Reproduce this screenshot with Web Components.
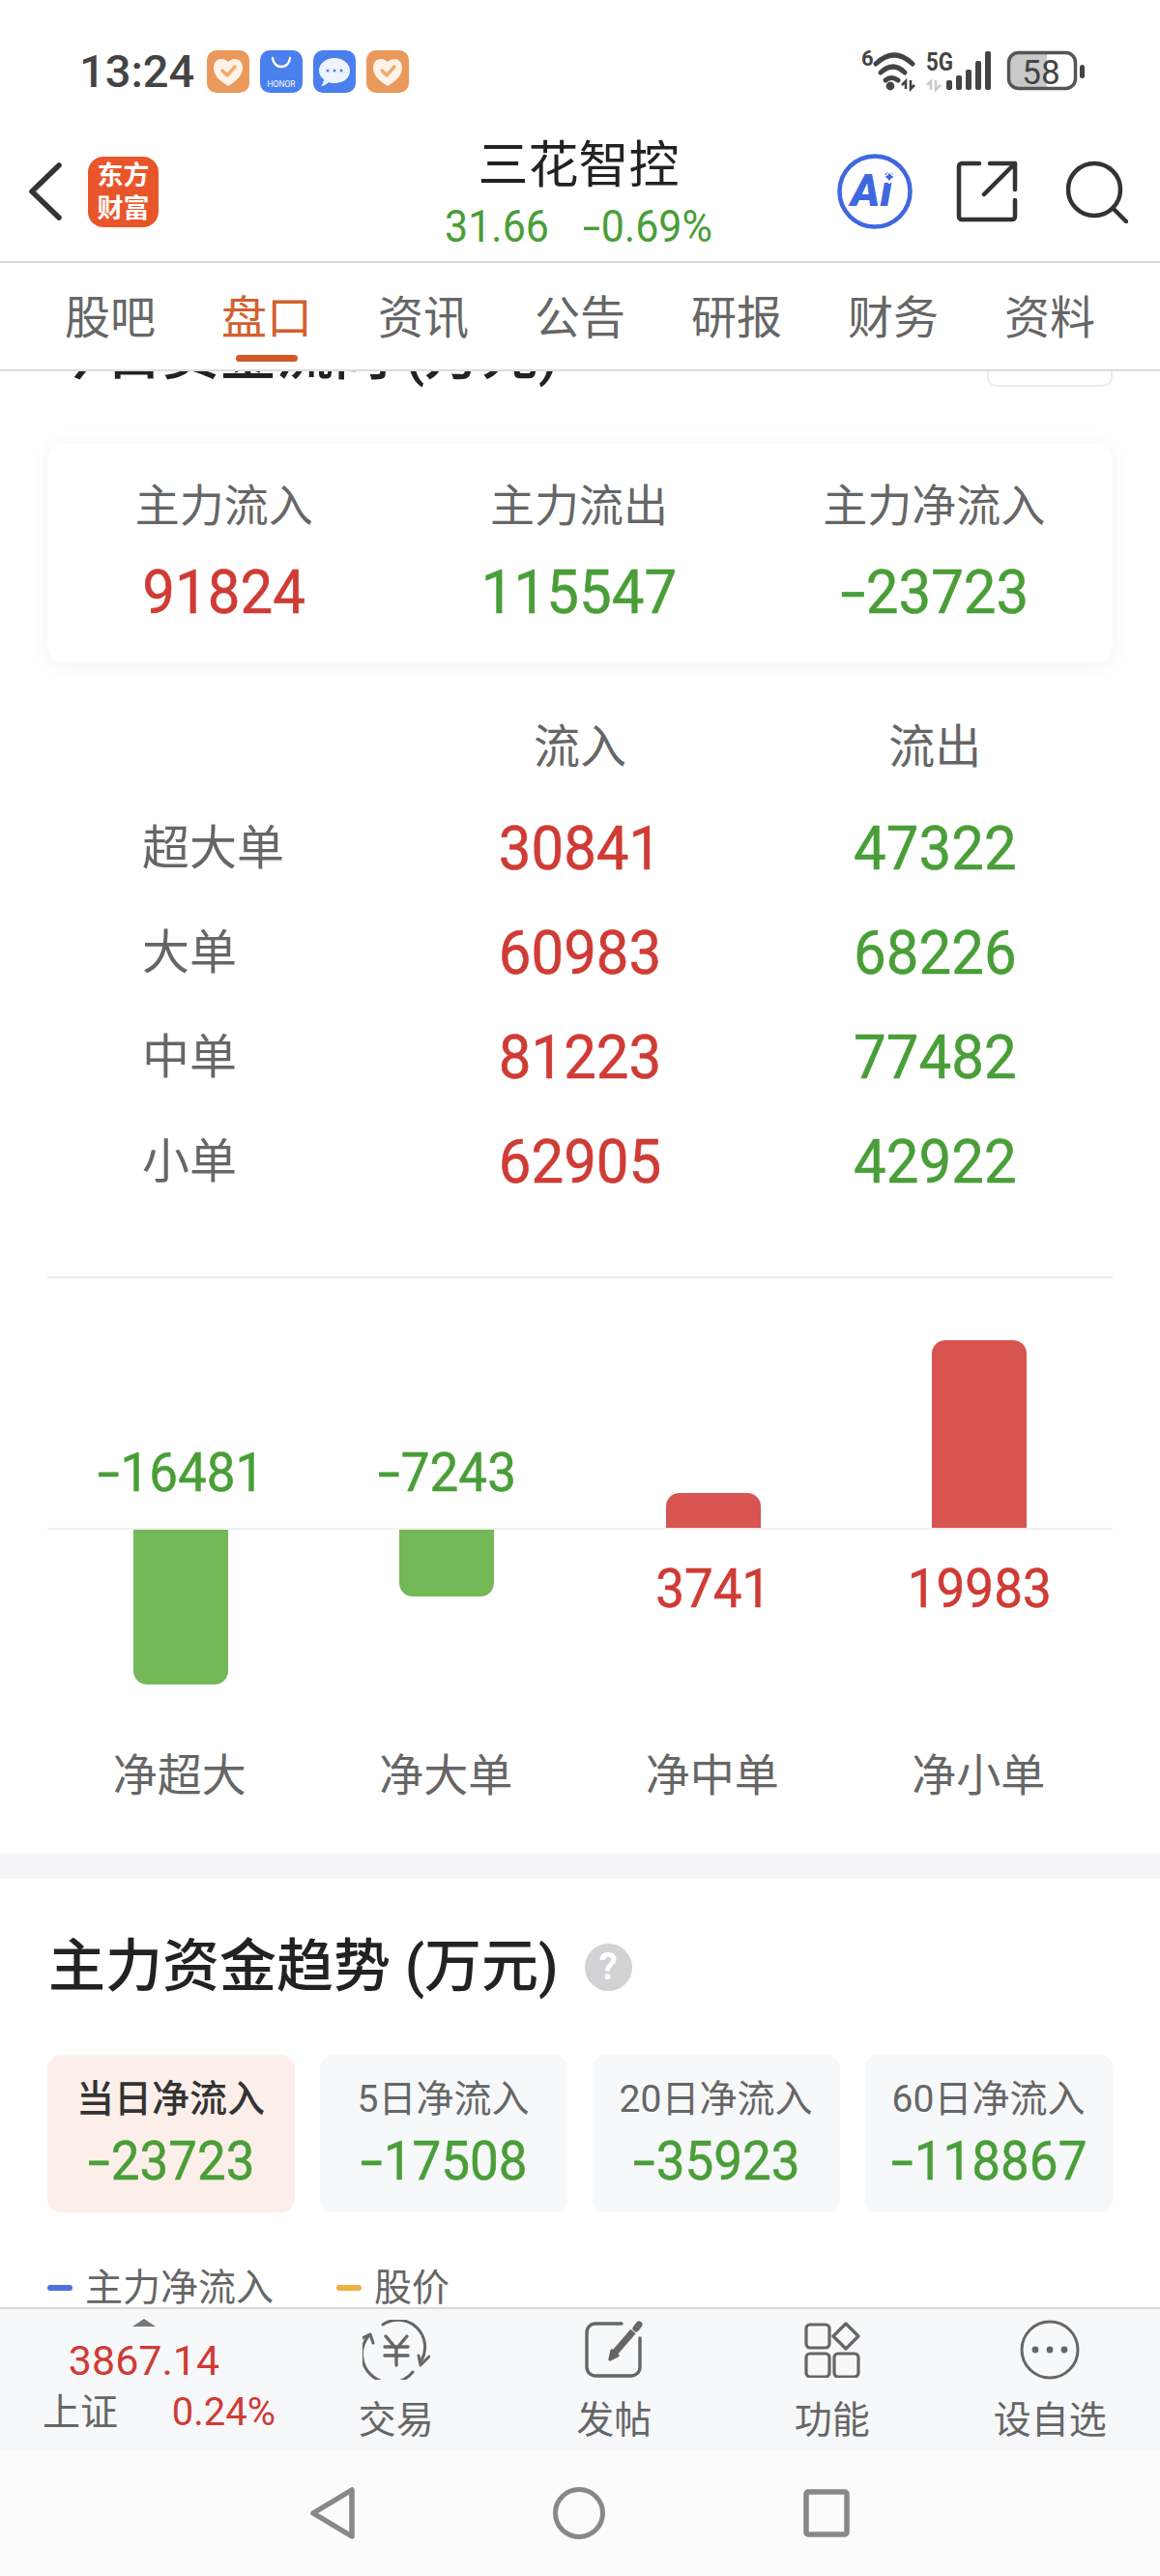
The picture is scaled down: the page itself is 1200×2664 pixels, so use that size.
<!DOCTYPE html>
<html lang="zh">
<head>
<meta charset="utf-8">
<title>三花智控</title>
<style>
  html, body { margin: 0; padding: 0; background: #fff; }
  body {
    width: 1200px;
    height: 2664px;
    overflow: hidden;
    display: flex;
    flex-direction: column;
    font-family: Roboto, "Noto Sans CJK SC", sans-serif;
  }
  body > * { flex: none; }
  body > scroll-area { flex: 1 1 0; min-height: 0; }
</style>
</head>
<body>
  <status-bar></status-bar>
  <app-header name="三花智控" price="31.66" change="-0.69%"></app-header>
  <tab-strip active="盘口" items="股吧,盘口,资讯,公告,研报,财务,资料"></tab-strip>

  <scroll-area>
    <clipped-title>今日资金流向 (万元)</clipped-title>
    <flow-summary>
      <flow-stat label="主力流入" tone="up" value="91824"></flow-stat>
      <flow-stat label="主力流出" tone="down" value="115547"></flow-stat>
      <flow-stat label="主力净流入" tone="down" value="-23723"></flow-stat>
    </flow-summary>
    <flow-table></flow-table>
    <net-chart>
      <net-bar label="净超大" value="-16481" height="160"></net-bar>
      <net-bar label="净大单" value="-7243" height="69"></net-bar>
      <net-bar label="净中单" value="3741" height="36"></net-bar>
      <net-bar label="净小单" value="19983" height="194"></net-bar>
    </net-chart>
    <trend-section heading="主力资金趋势 (万元)">
      <trend-tab slot="tabs" label="当日净流入" value="-23723" active></trend-tab>
      <trend-tab slot="tabs" label="5日净流入" value="-17508"></trend-tab>
      <trend-tab slot="tabs" label="20日净流入" value="-35923"></trend-tab>
      <trend-tab slot="tabs" label="60日净流入" value="-118867"></trend-tab>
    </trend-section>
  </scroll-area>

  <bottom-bar>
    <tool-item label="交易">
      <svg width="70" height="62" viewBox="0 0 70 62" fill="none" stroke="#666" stroke-width="3" stroke-linecap="round" stroke-linejoin="round">
        <path d="M21 5A28 28 0 0 1 61 42"/>
        <path d="M69 38L60 47L58 37"/>
        <path d="M52 54A28 28 0 0 1 6 17"/>
        <path d="M0 19L8 15L11 24"/>
        <path d="M24 17L35 30L46 17M23 28H47M23 37H47M35 30V47" stroke-width="3.4"/>
      </svg>
    </tool-item>
    <tool-item label="发帖">
      <svg width="60" height="60" viewBox="0 0 60 60" fill="none" stroke="#666" stroke-width="3.4" stroke-linecap="round" stroke-linejoin="round">
        <path d="M38 3H11a9 9 0 0 0-9 9V48a9 9 0 0 0 9 9H48a9 9 0 0 0 9-9V18"/>
        <path d="M31 33L50 11" stroke-width="7" stroke-linecap="butt"/>
        <path d="M26 40L28 31L34 36Z" fill="#666"/>
        <path d="M53 8L56 4" stroke-width="7"/>
      </svg>
    </tool-item>
    <tool-item label="功能">
      <svg width="58" height="58" viewBox="0 0 58 58" fill="none" stroke="#666" stroke-width="3.2" stroke-linejoin="round">
        <rect x="2" y="3" width="24" height="24" rx="4"/>
        <rect x="2" y="33" width="24" height="24" rx="4"/>
        <rect x="31" y="33" width="25" height="24" rx="4"/>
        <path d="M43 2L56 15L43 28L30 15Z"/>
      </svg>
    </tool-item>
    <tool-item label="设自选">
      <svg width="62" height="62" viewBox="0 0 62 62" fill="none" stroke="#666" stroke-width="3">
        <circle cx="31" cy="31" r="29"/>
        <circle cx="16" cy="31" r="3.4" fill="#666" stroke="none"/>
        <circle cx="31" cy="31" r="3.4" fill="#666" stroke="none"/>
        <circle cx="46" cy="31" r="3.4" fill="#666" stroke="none"/>
      </svg>
    </tool-item>
  </bottom-bar>
  <nav-bar></nav-bar>

<script>
const UP = '#cf3b35';
const DOWN = '#4a9e38';
const CJK = 'Roboto, "Noto Sans CJK SC", sans-serif';

// the app's digits are a bit taller and its minus a bit wider than Roboto's
const NUM_CSS = `
  .n {
    display: inline-block;
    transform: scaleY(1.06);
    -webkit-text-stroke: .5px currentColor;
  }
  .m {
    display: inline-block;
    transform: scaleX(1.55);
    margin: 0 .09em;
  }
`;
function num(value) {
  const text = value.startsWith('-') ? `<span class="m">-</span>${value.slice(1)}` : value;
  return `<span class="n">${text}</span>`;
}

class StatusBar extends HTMLElement {
  constructor() {
    super();
    this.attachShadow({ mode: 'open' });
    const heart = `
      <svg width="44" height="44" viewBox="0 0 44 44">
        <rect width="44" height="44" rx="10" fill="#e9995c"/>
        <path d="M22 37C12 31 7 25 7 18C7 12 11 9 15 9C18 9 20 10 22 12C24 10 26 9 29 9C33 9 37 12 37 18C37 25 32 31 22 37Z" fill="#fdf3e8"/>
        <path d="M16 21L21 26L29 17" fill="none" stroke="#eeaa6c" stroke-width="3.4" stroke-linecap="round" stroke-linejoin="round"/>
      </svg>`;
    this.shadowRoot.innerHTML = `
      <style>
        :host {
          display: flex;
          justify-content: space-between;
          height: 130px;
          box-sizing: border-box;
          padding: 50px 78px 0 82px;
          background: #fff;
        }
        .left { display: flex; align-items: flex-start; gap: 11px; margin-top: 2px; }
        .time {
          width: 121px;
          margin-top: -5px;
          font: 500 47px/54px Roboto, sans-serif;
          color: #444;
        }
        svg { display: block; }
      </style>
      <div class="left">
        <div class="time">13:24</div>
        ${heart}
        <svg width="44" height="44" viewBox="0 0 44 44">
          <rect width="44" height="44" rx="10" fill="#4a80ee"/>
          <path d="M13 8C14 20 30 20 31 8" fill="none" stroke="#fff" stroke-width="2.4" stroke-linecap="round"/>
          <text x="22" y="38" text-anchor="middle" font-family="Roboto, sans-serif" font-size="8.5" fill="#fff">HONOR</text>
        </svg>
        <svg width="44" height="44" viewBox="0 0 44 44">
          <rect width="44" height="44" rx="10" fill="#4a80ee"/>
          <path d="M22 8C31 8 38 14 38 21C38 29 31 34 22 34C20 34 18 34 16 33C14 35 11 37 8 37C10 35 11 32 11 30C8 28 6 25 6 21C6 14 13 8 22 8Z" fill="#eef4fe"/>
          <circle cx="15" cy="21" r="1.5" fill="#4a80ee"/><circle cx="22" cy="21" r="1.5" fill="#4a80ee"/><circle cx="29" cy="21" r="1.5" fill="#4a80ee"/>
        </svg>
        ${heart}
      </div>
      <svg width="231" height="46" viewBox="891 50 231 46">
        <text x="891" y="68" font-family="Roboto, sans-serif" font-weight="700" font-size="22" fill="#444">6</text>
        <g fill="none" stroke="#444" stroke-width="5" stroke-linecap="round">
          <path d="M906 66Q925 48 944 66"/>
          <path d="M911 75Q924 63 936 75"/>
          <path d="M916 83Q922 78 929 83"/>
        </g>
        <circle cx="921" cy="89" r="4.4" fill="#444"/>
        <path d="M937 92V84L933 88M942 83V92L946 88" fill="none" stroke="#444" stroke-width="2.6"/>
        <text x="958" y="73" font-family="Roboto, sans-serif" font-weight="700" font-size="25" textLength="28" lengthAdjust="spacingAndGlyphs" fill="#444">5G</text>
        <path d="M963 93V84L959 88M968 83V93L973 88" fill="none" stroke="#ccc" stroke-width="2.6"/>
        <g fill="#444">
          <rect x="979" y="83" width="6" height="10" rx="2"/>
          <rect x="989" y="78" width="6" height="15" rx="2"/>
          <rect x="999" y="72" width="6" height="21" rx="2"/>
          <rect x="1009" y="63" width="6" height="30" rx="2"/>
          <rect x="1019" y="53" width="6" height="40" rx="2"/>
        </g>
        <path d="M1052 55H1083V91H1052A9 9 0 0 1 1043 82V64A9 9 0 0 1 1052 55Z" fill="#c9c9c9"/>
        <rect x="1043.500" y="54.500" width="69" height="37" rx="10" fill="none" stroke="#555" stroke-width="3.4"/>
        <text x="1077" y="87" text-anchor="middle" font-family="Roboto, sans-serif" font-size="35" fill="#444">58</text>
        <rect x="1117" y="67" width="5" height="14" rx="2.500" fill="#444"/>
      </svg>
    `;
  }
}

class AppHeader extends HTMLElement {
  constructor() {
    super();
    this.attachShadow({ mode: 'open' });
    const name = this.getAttribute('name');
    const price = this.getAttribute('price');
    const change = this.getAttribute('change');
    this.shadowRoot.innerHTML = `
      <style>
        ${NUM_CSS}
        :host {
          display: grid;
          grid-template-columns: 1fr auto 1fr;
          height: 142px;
          box-sizing: border-box;
          border-bottom: 2px solid #d9d9d9;
          padding: 0 33px 0 30px;
          background: #fff;
          font-family: ${CJK};
        }
        .left, .right { display: flex; align-items: center; height: 140px; }
        .left { gap: 27px; }
        .right { justify-content: flex-end; gap: 45px; margin-top: -2px; }
        .right svg:last-child { margin-left: 5px; }
        .logo {
          width: 73px;
          height: 73px;
          margin-top: -3px;
          border-radius: 16px;
          background: #e9552a;
          color: #fff;
          display: flex;
          flex-direction: column;
          align-items: center;
          justify-content: center;
          font-size: 27px;
          line-height: 34px;
          font-weight: 700;
        }
        .center { padding-top: 12px; text-align: center; }
        .name { font-size: 52px; line-height: 60px; color: #222; }
        .quote {
          display: flex;
          justify-content: center;
          gap: 34px;
          margin-top: 7px;
          font-size: 43px;
          line-height: 50px;
          color: ${DOWN};
        }
        .quote .n { -webkit-text-stroke: 0; }
        svg { display: block; }
      </style>
      <div class="left">
        <svg width="34" height="60" viewBox="0 0 34 60" fill="none" stroke="#333" stroke-width="5.500" stroke-linecap="round" stroke-linejoin="round" style="margin-top:-4px">
          <path d="M31 3L3 30L31 57"/>
        </svg>
        <div class="logo"><span>东方</span><span>财富</span></div>
      </div>
      <div class="center">
        <div class="name">${name}</div>
        <div class="quote">${num(price)}${num(change)}</div>
      </div>
      <div class="right">
        <svg width="78" height="80" viewBox="0 0 78 80">
          <circle cx="39" cy="40" r="36.500" fill="none" stroke="#3f67e0" stroke-width="4.500"/>
          <text x="14" y="55" font-family="Roboto, sans-serif" font-weight="900" font-style="italic" font-size="46" fill="#3f67e0">Ai</text>
          <path d="M54 18Q55 24 61 25Q55 26 54 32Q53 26 47 25Q53 24 54 18Z" fill="#3f67e0" stroke="#fff" stroke-width="1.500"/>
        </svg>
        <svg width="64" height="64" viewBox="0 0 64 64" fill="none" stroke="#333" stroke-width="4.500" stroke-linecap="round" stroke-linejoin="round">
          <path d="M24 3H6A3 3 0 0 0 3 6V58A3 3 0 0 0 6 61H58A3 3 0 0 0 61 58V41"/>
          <path d="M35 3H61V30M61 3L29 35"/>
        </svg>
        <svg width="64" height="66" viewBox="0 0 64 66" fill="none" stroke="#333" stroke-width="4.500" stroke-linecap="round">
          <circle cx="29" cy="31" r="27"/>
          <path d="M49 51L62 64"/>
        </svg>
      </div>
    `;
  }
}

class TabStrip extends HTMLElement {
  constructor() {
    super();
    this.attachShadow({ mode: 'open' });
    const active = this.getAttribute('active');
    const cells = this.getAttribute('items').split(',').map(t =>
      `<div class="tab${t === active ? ' on' : ''}">${t}</div>`).join('');
    this.shadowRoot.innerHTML = `
      <style>
        :host {
          display: grid;
          grid-template-columns: repeat(7, 1fr);
          height: 112px;
          box-sizing: border-box;
          padding: 0 33px;
          border-bottom: 2px solid #dcdcdc;
          background: #fff;
          font-family: ${CJK};
        }
        .tab {
          position: relative;
          height: 110px;
          text-align: center;
          font-size: 47px;
          line-height: 114px;
          color: #666;
        }
        .tab.on { color: #d2602e; }
        .tab.on::after {
          content: "";
          position: absolute;
          left: 50%;
          bottom: 8px;
          width: 64px;
          height: 7px;
          margin-left: -32px;
          border-radius: 4px;
          background: #d0592a;
        }
      </style>
      ${cells}
    `;
  }
}

class ScrollArea extends HTMLElement {
  constructor() {
    super();
    this.attachShadow({ mode: 'open' });
    this.shadowRoot.innerHTML = `
      <style>
        :host { display: block; overflow: hidden; background: #fff; }
      </style>
      <slot></slot>
    `;
  }
}

class ClippedTitle extends HTMLElement {
  constructor() {
    super();
    this.attachShadow({ mode: 'open' });
    this.shadowRoot.innerHTML = `
      <style>
        :host {
          display: flex;
          justify-content: space-between;
          height: 70px;
          margin-top: -52px;
          padding: 0 49px 0 50px;
          font: 500 59px/70px ${CJK};
          color: #222;
        }
        .more {
          width: 126px;
          height: 64px;
          border: 2px solid #ececec;
          border-radius: 0 0 10px 10px;
        }
      </style>
      <div><slot></slot></div>
      <div class="more"></div>
    `;
  }
}

class FlowSummary extends HTMLElement {
  constructor() {
    super();
    this.attachShadow({ mode: 'open' });
    this.shadowRoot.innerHTML = `
      <style>
        :host {
          display: grid;
          grid-template-columns: repeat(3, 1fr);
          height: 226px;
          margin: 57px 49px 0;
          border-radius: 16px;
          background: #fff;
          box-shadow: 0 2px 22px rgba(0, 0, 0, .06);
        }
      </style>
      <slot></slot>
    `;
  }
}

class FlowStat extends HTMLElement {
  constructor() {
    super();
    this.attachShadow({ mode: 'open' });
    const tone = this.getAttribute('tone') === 'up' ? UP : DOWN;
    this.shadowRoot.innerHTML = `
      <style>
        ${NUM_CSS}
        :host {
          display: block;
          padding-top: 40px;
          text-align: center;
          font-family: ${CJK};
        }
        .label { font-size: 46px; line-height: 48px; color: #666; margin-right: 2px; }
        .value { margin-top: 31px; font-size: 60px; line-height: 70px; color: ${tone}; margin-right: 2px; }
      </style>
      <div class="label">${this.getAttribute('label')}</div>
      <div class="value">${num(this.getAttribute('value'))}</div>
    `;
  }
}

class FlowTable extends HTMLElement {
  constructor() {
    super();
    this.attachShadow({ mode: 'open' });
    const rows = [
      ['超大单', '30841', '47322'],
      ['大单', '60983', '68226'],
      ['中单', '81223', '77482'],
      ['小单', '62905', '42922'],
    ];
    this.shadowRoot.innerHTML = `
      <style>
        ${NUM_CSS}
        :host {
          display: grid;
          grid-template-columns: repeat(3, 1fr);
          grid-template-rows: 91px repeat(4, 108px);
          margin: 48px 49px 0;
          padding-bottom: 64px;
          border-bottom: 2px solid #ececec;
          font-family: ${CJK};
        }
        .head {
          text-align: center;
          font-size: 48px;
          line-height: 80px;
          color: #666;
        }
        .name { padding-left: 98px; font-size: 49px; line-height: 108px; color: #666; }
        .cell { text-align: center; font-size: 60px; line-height: 108px; }
        .up { color: ${UP}; }
        .down { color: ${DOWN}; }
      </style>
      <div></div>
      <div class="head">流入</div>
      <div class="head">流出</div>
      ${rows.map(r => `
        <div class="name">${r[0]}</div>
        <div class="cell up">${num(r[1])}</div>
        <div class="cell down">${num(r[2])}</div>
      `).join('')}
    `;
  }
}

class NetChart extends HTMLElement {
  constructor() {
    super();
    this.attachShadow({ mode: 'open' });
    this.shadowRoot.innerHTML = `
      <style>
        :host {
          display: grid;
          grid-template-columns: repeat(4, 1fr);
          margin: 0 49px;
        }
      </style>
      <slot></slot>
    `;
  }
}

class NetBar extends HTMLElement {
  constructor() {
    super();
    this.attachShadow({ mode: 'open' });
    const value = this.getAttribute('value');
    const height = this.getAttribute('height');
    const negative = value.startsWith('-');
    const bar = `<div class="bar" style="height:${height}px"></div>`;
    const figure = `<div class="fig">${num(value)}</div>`;
    this.shadowRoot.innerHTML = `
      <style>
        ${NUM_CSS}
        :host {
          display: grid;
          grid-template-rows: 258px 233px 46px;
          height: 595px;
          justify-items: center;
          font-family: ${CJK};
        }
        .upper, .lower {
          justify-self: stretch;
          display: flex;
          flex-direction: column;
          align-items: center;
        }
        .upper { justify-content: flex-end; }
        .lower { border-top: 2px solid #f0f0f2; }
        .bar { width: 98px; background: ${negative ? '#74b858' : '#d75450'}; }
        .upper .bar { border-radius: 14px 14px 0 0; }
        .lower .bar { border-radius: 0 0 14px 14px; }
        .fig {
          font-size: 53px;
          line-height: 60px;
          color: ${negative ? DOWN : UP};
        }
        .upper .fig { margin-bottom: 27px; }
        .lower .fig { margin-top: 31px; }
        .label { font-size: 46px; line-height: 46px; color: #666; margin-right: 2px; }
      </style>
      <div class="upper">${negative ? figure : bar}</div>
      <div class="lower">${negative ? bar : figure}</div>
      <div class="label">${this.getAttribute('label')}</div>
    `;
  }
}

class TrendSection extends HTMLElement {
  constructor() {
    super();
    this.attachShadow({ mode: 'open' });
    this.shadowRoot.innerHTML = `
      <style>
        :host {
          display: block;
          border-top: 26px solid #f5f5f7;
          padding: 56px 49px 0;
          font-family: ${CJK};
        }
        .heading {
          display: flex;
          align-items: center;
          gap: 27px;
          margin-left: 1px;
          font-size: 59px;
          line-height: 70px;
          font-weight: 500;
          color: #222;
        }
        .help {
          width: 49px;
          height: 49px;
          border-radius: 50%;
          background: #d2d2d4;
          color: #fff;
          text-align: center;
          font-size: 38px;
          line-height: 49px;
          font-weight: 700;
        }
        .tabs {
          display: grid;
          grid-template-columns: repeat(4, 1fr);
          gap: 26px;
          margin-top: 56px;
        }
        .legend {
          display: flex;
          margin-top: 55px;
          font-size: 39px;
          line-height: 46px;
          color: #666;
        }
        .key { display: flex; align-items: center; gap: 13px; width: 299px; }
        .key i { width: 26px; height: 6px; border-radius: 3px; }
      </style>
      <div class="heading"><span>${this.getAttribute('heading')}</span><span class="help">?</span></div>
      <div class="tabs"><slot name="tabs"></slot></div>
      <div class="legend">
        <div class="key"><i style="background:#4f73de"></i>主力净流入</div>
        <div class="key"><i style="background:#efb040"></i>股价</div>
      </div>
    `;
  }
}

class TrendTab extends HTMLElement {
  constructor() {
    super();
    this.attachShadow({ mode: 'open' });
    const on = this.hasAttribute('active');
    this.shadowRoot.innerHTML = `
      <style>
        ${NUM_CSS}
        :host {
          display: block;
          height: 163px;
          box-sizing: border-box;
          padding-top: 23px;
          border-radius: 14px;
          background: ${on ? '#fcefe9' : '#f7f8fa'};
          text-align: center;
          font-family: ${CJK};
        }
        .label {
          font-size: 39px;
          line-height: 46px;
          margin-right: 1px;
          font-weight: ${on ? 500 : 400};
          color: ${on ? '#333' : '#666'};
        }
        .value { margin-top: 11px; font-size: 53px; line-height: 60px; color: ${DOWN}; }
      </style>
      <div class="label">${this.getAttribute('label')}</div>
      <div class="value">${num(this.getAttribute('value'))}</div>
    `;
  }
}

class BottomBar extends HTMLElement {
  constructor() {
    super();
    this.attachShadow({ mode: 'open' });
    this.shadowRoot.innerHTML = `
      <style>
        :host {
          display: grid;
          grid-template-columns: 298px repeat(4, 1fr);
          height: 148px;
          box-sizing: border-box;
          border-top: 2px solid #d9d9d9;
          background: #f7f8fa;
          font-family: ${CJK};
        }
        .index { display: flex; flex-direction: column; align-items: center; }
        .tri {
          width: 0;
          height: 0;
          margin-top: 10px;
          border-left: 12px solid transparent;
          border-right: 12px solid transparent;
          border-bottom: 8px solid #777;
        }
        .val { margin-top: 10px; font-size: 43px; line-height: 50px; color: ${UP}; }
        .row {
          align-self: stretch;
          display: flex;
          justify-content: space-between;
          align-items: center;
          margin-top: 6px;
          padding: 0 13px 0 44px;
          line-height: 46px;
        }
        .name { font-size: 39px; color: #666; }
        .pct { font-size: 40px; color: ${UP}; }
      </style>
      <div class="index">
        <div class="tri"></div>
        <div class="val">3867.14</div>
        <div class="row"><span class="name">上证</span><span class="pct">0.24%</span></div>
      </div>
      <slot></slot>
    `;
  }
}

class ToolItem extends HTMLElement {
  constructor() {
    super();
    this.attachShadow({ mode: 'open' });
    this.shadowRoot.innerHTML = `
      <style>
        :host {
          display: flex;
          flex-direction: column;
          align-items: center;
          padding: 10px 2px 0 0;
          font-family: ${CJK};
        }
        .icon { height: 64px; display: flex; align-items: center; justify-content: center; }
        .label { margin-top: 18px; font-size: 39px; line-height: 46px; color: #666; }
      </style>
      <div class="icon"><slot></slot></div>
      <div class="label">${this.getAttribute('label')}</div>
    `;
  }
}

class NavBar extends HTMLElement {
  constructor() {
    super();
    this.attachShadow({ mode: 'open' });
    this.shadowRoot.innerHTML = `
      <style>
        :host {
          display: flex;
          justify-content: center;
          align-items: center;
          gap: 205px;
          height: 130px;
          box-sizing: border-box;
          background: #fbfbfb;
        }
        svg { display: block; margin-top: -1px; }
      </style>
      <svg width="46" height="54" viewBox="0 0 46 54" fill="none" stroke="#888" stroke-width="5.500" stroke-linejoin="round">
        <path d="M43 3V51L3 27Z"/>
      </svg>
      <svg width="54" height="54" viewBox="0 0 54 54" fill="none" stroke="#888" stroke-width="5">
        <circle cx="27" cy="27" r="24.500"/>
      </svg>
      <svg width="48" height="50" viewBox="0 0 48 50" fill="none" stroke="#888" stroke-width="5.500" stroke-linejoin="round">
        <rect x="3" y="3" width="42" height="44" rx="2"/>
      </svg>
    `;
  }
}

customElements.define('status-bar', StatusBar);
customElements.define('app-header', AppHeader);
customElements.define('tab-strip', TabStrip);
customElements.define('scroll-area', ScrollArea);
customElements.define('clipped-title', ClippedTitle);
customElements.define('flow-summary', FlowSummary);
customElements.define('flow-stat', FlowStat);
customElements.define('flow-table', FlowTable);
customElements.define('net-chart', NetChart);
customElements.define('net-bar', NetBar);
customElements.define('trend-section', TrendSection);
customElements.define('trend-tab', TrendTab);
customElements.define('bottom-bar', BottomBar);
customElements.define('tool-item', ToolItem);
customElements.define('nav-bar', NavBar);
</script>
</body>
</html>
